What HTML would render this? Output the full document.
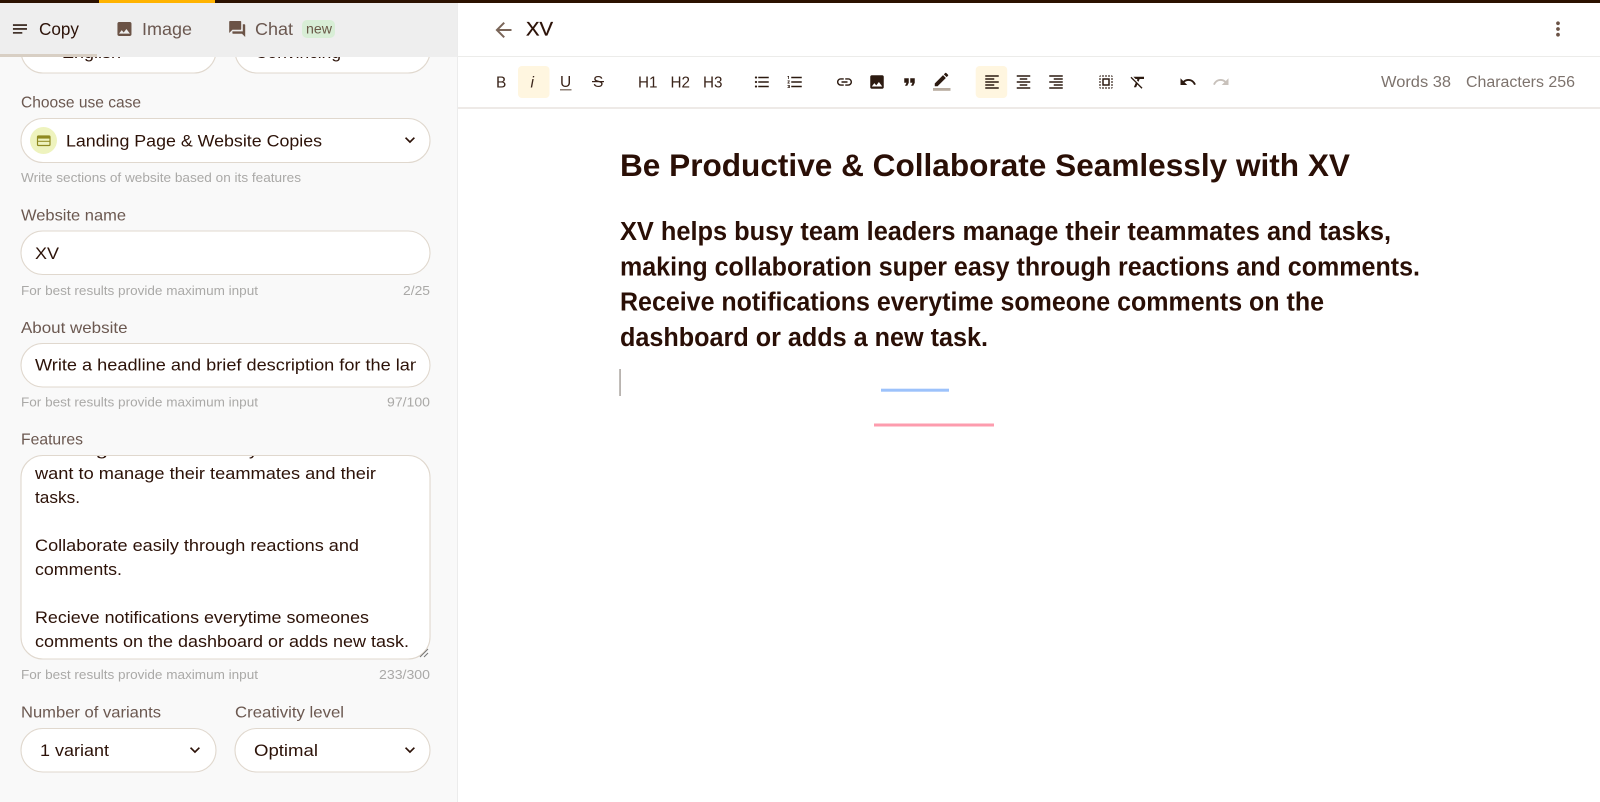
<!DOCTYPE html>
<html lang="en"><head><meta charset="utf-8"><title>XV</title>
<style>
html,body{margin:0;padding:0;background:#fff;width:1600px;height:802px;overflow:hidden}
svg{display:block;filter:blur(.3px)}
text{font-family:"Liberation Sans",sans-serif;white-space:pre}
.l{font-size:16px;fill:#6b5850}
.v{font-size:16.8px;fill:#2c1208}
.h{font-size:13px;fill:#aaa9a7}
.t{font-size:17.5px}
.b{font-size:15.5px;fill:#3a241a}
.w{font-size:15.5px;fill:#7d736d}
.e{font-size:25.5px;font-weight:700;fill:#2a0f06}
.f{fill:#fff;stroke:#e0d8ce;stroke-width:1.1}
</style></head><body>
<svg width="1600" height="802" viewBox="0 0 1600 802">
<defs>
<path id="notes" d="M3 18h12v-2H3v2zM3 6v2h18V6H3zm0 7h18v-2H3v2z"/>
<path id="image" d="M21 19V5c0-1.1-.9-2-2-2H5c-1.1 0-2 .9-2 2v14c0 1.1.9 2 2 2h14c1.100 0 2-.9 2-2zM8.5 13.5l2.5 3.01L14.5 12l4.5 6H5l3.5-4.500z"/>
<path id="forum" d="M21 6h-2v9H6v2c0 .55.45 1 1 1h11l4 4V7c0-.55-.45-1-1-1zm-4 6V3c0-.55-.45-1-1-1H3c-.55 0-1 .45-1 1v14l4-4h10c.55 0 1-.45 1-1z"/>
<path id="back" d="M20 11H7.83l5.59-5.59L12 4l-8 8 8 8 1.41-1.41L7.83 13H20v-2z"/>
<path id="more" d="M12 8c1.1 0 2-.9 2-2s-.9-2-2-2-2 .9-2 2 .9 2 2 2zm0 2c-1.1 0-2 .9-2 2s.9 2 2 2 2-.9 2-2-.9-2-2-2zm0 6c-1.1 0-2 .9-2 2s.9 2 2 2 2-.9 2-2-.9-2-2-2z"/>
<path id="chev" d="M16.59 8.59L12 13.17 7.41 8.59 6 10l6 6 6-6z"/>
<path id="ul" d="M4 10.5c-.83 0-1.5.67-1.5 1.5s.67 1.5 1.5 1.5 1.5-.67 1.5-1.5-.67-1.5-1.5-1.5zm0-6c-.83 0-1.5.67-1.5 1.5S3.17 7.5 4 7.5 5.5 6.83 5.5 6 4.83 4.5 4 4.5zm0 12c-.83 0-1.5.68-1.5 1.5s.68 1.5 1.5 1.5 1.5-.68 1.5-1.5-.67-1.5-1.5-1.5zM7 19h14v-2H7v2zm0-6h14v-2H7v2zm0-8v2h14V5H7z"/>
<path id="ol" d="M2 17h2v.5H3v1h1v.5H2v1h3v-4H2v1zm1-9h1V4H2v1h1v3zm-1 3h1.8L2 13.1v.9h3v-1H3.2L5 10.9V10H2v1zm5-6v2h14V5H7zm0 14h14v-2H7v2zm0-6h14v-2H7v2z"/>
<path id="link" d="M3.9 12c0-1.71 1.39-3.1 3.1-3.1h4V7H7c-2.76 0-5 2.24-5 5s2.24 5 5 5h4v-1.9H7c-1.71 0-3.1-1.39-3.1-3.1zM8 13h8v-2H8v2zm9-6h-4v1.9h4c1.71 0 3.1 1.39 3.1 3.1s-1.39 3.1-3.1 3.1h-4V17h4c2.76 0 5-2.24 5-5s-2.24-5-5-5z"/>
<path id="quote" d="M6 17h3l2-4V7H5v6h3zm8 0h3l2-4V7h-6v6h3z"/>
<path id="pen" d="M3 17.25V21h3.75L17.81 9.94l-3.75-3.75L3 17.25zM20.71 7.04a1 1 0 000-1.41l-2.34-2.34a1 1 0 00-1.41 0l-1.83 1.83 3.75 3.75 1.83-1.83z"/>
<path id="al" d="M15 15H3v2h12v-2zm0-8H3v2h12V7zM3 13h18v-2H3v2zm0 8h18v-2H3v2zM3 3v2h18V3H3z"/>
<path id="ac" d="M7 15v2h10v-2H7zm-4 6h18v-2H3v2zm0-8h18v-2H3v2zm4-6v2h10V7H7zM3 3v2h18V3H3z"/>
<path id="ar" d="M3 21h18v-2H3v2zm6-4h12v-2H9v2zm-6-4h18v-2H3v2zm6-4h12V7H9v2zM3 3v2h18V3H3z"/>
<path id="sel" d="M3 5h2V3c-1.1 0-2 .9-2 2zm0 8h2v-2H3v2zm4 8h2v-2H7v2zM3 9h2V7H3v2zm10-6h-2v2h2V3zm6 0v2h2c0-1.1-.9-2-2-2zM5 21v-2H3c0 1.1.9 2 2 2zm-2-4h2v-2H3v2zM9 3H7v2h2V3zm2 18h2v-2h-2v2zm8-8h2v-2h-2v2zm0 8c1.1 0 2-.9 2-2h-2v2zm0-12h2V7h-2v2zm0 8h2v-2h-2v2zm-4 4h2v-2h-2v2zm0-16h2V3h-2v2zM7 17h10V7H7v10zm2-8h6v6H9V9z"/>
<path id="clr" d="M3.27 5L2 6.27l6.97 6.97L6.5 19h3l1.57-3.66L16.73 21 18 19.73 3.55 5.27 3.27 5zM6 5v.18L8.82 8h2.4l-.72 1.68 2.1 2.1L14.21 8H20V5H6z"/>
<path id="undo" d="M12.5 8c-2.65 0-5.05.99-6.9 2.6L2 7v9h9l-3.62-3.62c1.39-1.16 3.16-1.88 5.12-1.88 3.54 0 6.55 2.31 7.6 5.5l2.37-.78C21.08 11.03 17.15 8 12.5 8z"/>
<path id="redo" d="M18.4 10.6C16.55 8.99 14.15 8 11.5 8c-4.65 0-8.58 3.03-9.96 7.22L3.9 16c1.05-3.19 4.05-5.5 7.6-5.5 1.95 0 3.73.72 5.12 1.88L13 16h9V7l-3.6 3.6z"/>
<clipPath id="cInput"><rect x="30" y="343" width="386" height="44"/></clipPath>
<clipPath id="cArea"><rect x="21" y="456" width="408" height="203" rx="22"/></clipPath>
</defs>

<rect width="1600" height="802" fill="#fff"/>
<rect width="457" height="802" fill="#f9f9f9"/>
<rect x="457" width="1" height="802" fill="#ececec"/>

<!-- top dropdowns -->
<rect class="f" x="21" y="20" width="195" height="53" rx="22"/>
<rect class="f" x="235" y="20" width="195" height="53" rx="22"/>
<text class="v" x="62" y="58" textLength="59" lengthAdjust="spacingAndGlyphs">English</text>
<text class="v" x="255" y="58" textLength="86" lengthAdjust="spacingAndGlyphs">Convincing</text>

<!-- tab bar -->
<rect y="3" width="457" height="54" fill="#eeeeee"/>
<rect y="54" width="97" height="3" fill="#d8cfc4"/>
<use href="#notes" transform="translate(10.6 19.6) scale(.78)" fill="#2c1a10"/>
<text class="t" x="39" y="35" fill="#2c1208" textLength="40" lengthAdjust="spacingAndGlyphs">Copy</text>
<use href="#image" transform="translate(115.100 19.6) scale(.78)" fill="#6b5346"/>
<text class="t" x="142" y="35" fill="#6b5850" textLength="50" lengthAdjust="spacingAndGlyphs">Image</text>
<use href="#forum" transform="translate(227.6 19.4) scale(.8)" fill="#6b5346"/>
<text class="t" x="255" y="35" fill="#6b5850" textLength="38" lengthAdjust="spacingAndGlyphs">Chat</text>
<rect x="302" y="20" width="33" height="18" rx="5" fill="#d8eed6"/>
<text x="306" y="33.5" font-size="13.5" fill="#6a5a48" textLength="26" lengthAdjust="spacingAndGlyphs">new</text>

<!-- use case -->
<text class="l" x="21" y="107.7" textLength="120" lengthAdjust="spacingAndGlyphs">Choose use case</text>
<rect class="f" x="21" y="118.5" width="409" height="44" rx="22"/>
<circle cx="43.5" cy="140.5" r="13.5" fill="#eef3be"/>
<rect x="37.5" y="136" width="12.500" height="9.500" rx="1" fill="none" stroke="#8f8a20" stroke-width="1.200"/>
<rect x="37.5" y="136" width="12.500" height="2.600" fill="#8f8a20"/>
<rect x="37.5" y="140.800" width="12.500" height="1" fill="#8f8a20"/>
<text class="v" x="66" y="146.7" textLength="256" lengthAdjust="spacingAndGlyphs">Landing Page &amp; Website Copies</text>
<use href="#chev" transform="translate(400 130) scale(.83)" fill="#2c1208"/>
<text class="h" x="21" y="182" textLength="280" lengthAdjust="spacingAndGlyphs">Write sections of website based on its features</text>

<!-- website name -->
<text class="l" x="21" y="220.7" textLength="105" lengthAdjust="spacingAndGlyphs">Website name</text>
<rect class="f" x="21" y="231" width="409" height="43.5" rx="21.7"/>
<text class="v" x="35" y="259" textLength="24" lengthAdjust="spacingAndGlyphs">XV</text>
<text class="h" x="21" y="295" textLength="237" lengthAdjust="spacingAndGlyphs">For best results provide maximum input</text>
<text class="h" x="403" y="295" textLength="27" lengthAdjust="spacingAndGlyphs">2/25</text>

<!-- about -->
<text class="l" x="21" y="333" textLength="106.500" lengthAdjust="spacingAndGlyphs">About website</text>
<rect class="f" x="21" y="343.500" width="409" height="43.500" rx="21.700"/>
<g clip-path="url(#cInput)"><text class="v" x="35" y="370.700" textLength="385" lengthAdjust="spacingAndGlyphs">Write a headline and brief description for the lan</text></g>
<text class="h" x="21" y="406.700" textLength="237" lengthAdjust="spacingAndGlyphs">For best results provide maximum input</text>
<text class="h" x="387" y="406.700" textLength="43" lengthAdjust="spacingAndGlyphs">97/100</text>

<!-- features -->
<text class="l" x="21" y="444.700" textLength="62" lengthAdjust="spacingAndGlyphs">Features</text>
<rect class="f" x="21" y="455.500" width="409" height="203.500" rx="22"/>
<g clip-path="url(#cArea)">
<text class="v" x="40" y="455" textLength="68" lengthAdjust="spacingAndGlyphs">Manag</text>
<text class="v" x="220" y="455" textLength="38" lengthAdjust="spacingAndGlyphs">busy</text>
<text class="v" x="35" y="479" textLength="341" lengthAdjust="spacingAndGlyphs">want to manage their teammates and their</text>
<text class="v" x="35" y="503" textLength="45" lengthAdjust="spacingAndGlyphs">tasks.</text>
<text class="v" x="35" y="551" textLength="324" lengthAdjust="spacingAndGlyphs">Collaborate easily through reactions and</text>
<text class="v" x="35" y="575" textLength="87" lengthAdjust="spacingAndGlyphs">comments.</text>
<text class="v" x="35" y="623" textLength="334" lengthAdjust="spacingAndGlyphs">Recieve notifications everytime someones</text>
<text class="v" x="35" y="647" textLength="374" lengthAdjust="spacingAndGlyphs">comments on the dashboard or adds new task.</text>
</g>
<path d="M420 657l8-8M424 657l4-4" stroke="#777" stroke-width="1" fill="none"/>
<text class="h" x="21" y="679" textLength="237" lengthAdjust="spacingAndGlyphs">For best results provide maximum input</text>
<text class="h" x="379" y="679" textLength="51" lengthAdjust="spacingAndGlyphs">233/300</text>

<!-- bottom selects -->
<text class="l" x="21" y="717.700" textLength="140" lengthAdjust="spacingAndGlyphs">Number of variants</text>
<text class="l" x="235" y="717.700" textLength="109" lengthAdjust="spacingAndGlyphs">Creativity level</text>
<rect class="f" x="21" y="728.500" width="195" height="43.500" rx="21.700"/>
<rect class="f" x="235" y="728.500" width="195" height="43.500" rx="21.700"/>
<text class="v" x="40" y="756" textLength="69" lengthAdjust="spacingAndGlyphs">1 variant</text>
<text class="v" x="254" y="756" textLength="64" lengthAdjust="spacingAndGlyphs">Optimal</text>
<use href="#chev" transform="translate(185 740) scale(.83)" fill="#2c1208"/>
<use href="#chev" transform="translate(400 740) scale(.83)" fill="#2c1208"/>

<!-- top strip -->
<rect width="1600" height="3" fill="#2b1100"/>
<rect x="99" width="116" height="3" fill="#ffb300"/>

<!-- editor header -->
<rect x="458" y="56" width="1142" height="1" fill="#ececea"/>
<use href="#back" transform="translate(491.500 18) scale(1)" fill="#7a6558"/>
<text x="526" y="35.300" font-size="19.500" fill="#2c1208" stroke="#2c1208" stroke-width=".3" textLength="27" lengthAdjust="spacingAndGlyphs">XV</text>
<use href="#more" transform="translate(1546.600 17.600) scale(.95)" fill="#6b5346"/>

<!-- toolbar -->
<rect x="458" y="107" width="1142" height="2" fill="#eeeae7"/>
<rect x="518" y="66" width="31.500" height="32" rx="4" fill="#fff6e0"/>
<rect x="975.700" y="66" width="31.500" height="32" rx="4" fill="#fff6e0"/>
<text class="b" x="496" y="87.300">B</text>
<text class="b" x="530.500" y="87.300" font-style="italic">i</text>
<text class="b" x="560" y="87">U</text>
<rect x="560" y="89" width="11.500" height="1.500" fill="#8d7f75"/>
<text class="b" x="593" y="87">S</text>
<rect x="592" y="81" width="12" height="1.200" fill="#3a241a"/>
<text class="b" x="638" y="87.300" textLength="19.500" lengthAdjust="spacingAndGlyphs">H1</text>
<text class="b" x="670.500" y="87.300" textLength="19.500" lengthAdjust="spacingAndGlyphs">H2</text>
<text class="b" x="703" y="87.300" textLength="19.500" lengthAdjust="spacingAndGlyphs">H3</text>
<g fill="#2c1a10">
<use href="#ul" transform="translate(753 73) scale(.75)"/>
<use href="#ol" transform="translate(786 73) scale(.75)"/>
<use href="#link" transform="translate(835.500 73) scale(.75)"/>
<use href="#image" transform="translate(868 73) scale(.75)"/>
<use href="#quote" transform="translate(900.500 73) scale(.75)"/>
<use href="#pen" transform="translate(932.500 70.500) scale(.75)"/>
<use href="#al" transform="translate(983 73) scale(.75)"/>
<use href="#ac" transform="translate(1014.500 73) scale(.75)"/>
<use href="#ar" transform="translate(1047 73) scale(.75)"/>
<use href="#sel" transform="translate(1097 73) scale(.75)"/>
<use href="#clr" transform="translate(1129 73) scale(.75)"/>
<use href="#undo" transform="translate(1179 73) scale(.75)"/>
</g>
<rect x="933" y="88" width="17.500" height="2.800" fill="#b8aca0"/>
<use href="#redo" transform="translate(1212 73) scale(.75)" fill="#c8c1bb"/>
<text class="w" x="1381" y="87" textLength="70" lengthAdjust="spacingAndGlyphs">Words 38</text>
<text class="w" x="1466" y="87" textLength="109" lengthAdjust="spacingAndGlyphs">Characters 256</text>

<!-- document -->
<text x="620" y="176" font-size="31.500" font-weight="700" fill="#2a0f06" textLength="730" lengthAdjust="spacingAndGlyphs">Be Productive &amp; Collaborate Seamlessly with XV</text>
<text class="e" x="620" y="240" textLength="771" lengthAdjust="spacingAndGlyphs">XV helps busy team leaders manage their teammates and tasks,</text>
<text class="e" x="620" y="275.300" textLength="800" lengthAdjust="spacingAndGlyphs">making collaboration super easy through reactions and comments.</text>
<text class="e" x="620" y="310.600" textLength="704" lengthAdjust="spacingAndGlyphs">Receive notifications everytime someone comments on the</text>
<text class="e" x="620" y="346" textLength="368" lengthAdjust="spacingAndGlyphs">dashboard or adds a new task.</text>
<rect x="619.300" y="369" width="1.500" height="27" fill="#a8a29d"/>
<rect x="881" y="388.700" width="68" height="3" fill="#9cc2fb"/>
<rect x="874" y="423.500" width="120" height="3" fill="#fd9cae"/>
</svg>
</body></html>
